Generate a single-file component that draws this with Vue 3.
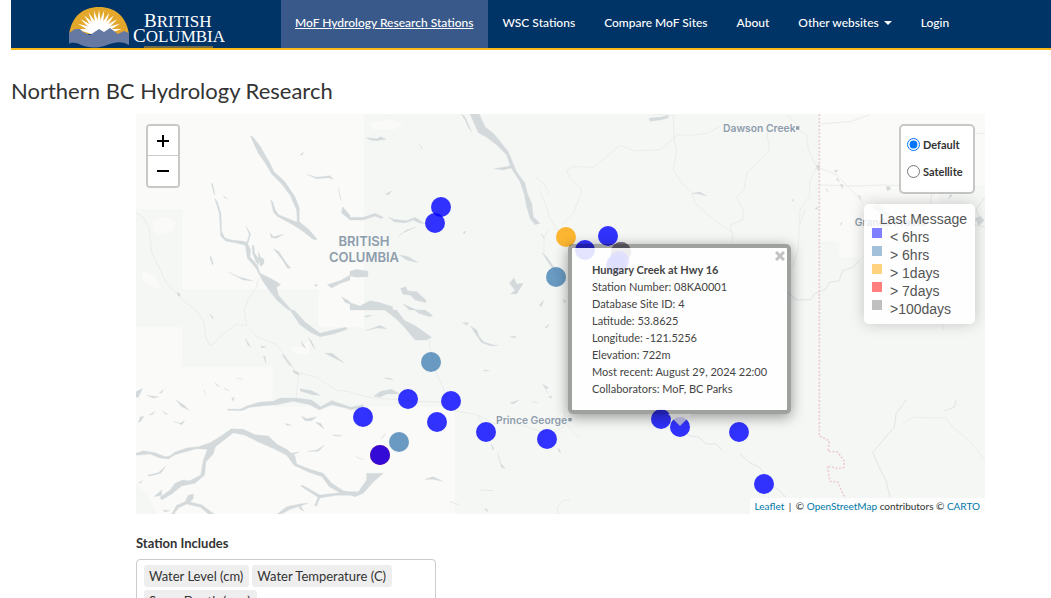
<script setup>
import { ref } from 'vue'

const basemap = ref('default')
const popupOpen = ref(true)

const links = [
  { label: 'MoF Hydrology Research Stations', active: true },
  { label: 'WSC Stations' },
  { label: 'Compare MoF Sites' },
  { label: 'About' },
  { label: 'Other websites', caret: true },
  { label: 'Login' },
]

const BLUE = '#0000ff'
const STEEL = '#4682b4'
// Map drawing units: three per screen pixel.
const stations = [
  [915, 279, BLUE], [897, 327, BLUE], [1290, 369, '#ffa500'], [1347, 408, BLUE],
  [1416, 366, BLUE], [1455, 414, '#ff0000'], [1455, 414, STEEL], [1455, 414, '#808080'], [1449, 441, BLUE], [1440, 453, BLUE],
  [1260, 489, STEEL], [885, 744, STEEL], [816, 855, BLUE], [945, 861, BLUE],
  [681, 909, BLUE], [903, 924, BLUE], [789, 984, STEEL], [732, 1023, '#ff0000'],
  [732, 1023, BLUE], [1050, 954, BLUE], [1233, 975, BLUE], [1575, 915, BLUE],
  [1632, 939, BLUE], [1809, 954, BLUE], [1884, 1110, BLUE],
]

const details = [
  'Station Number: 08KA0001',
  'Database Site ID: 4',
  'Latitude: 53.8625',
  'Longitude: -121.5256',
  'Elevation: 722m',
  'Most recent: August 29, 2024 22:00',
  'Collaborators: MoF, BC Parks',
]

const legend = [
  { color: 'blue', label: '< 6hrs' },
  { color: 'steel', label: '> 6hrs' },
  { color: 'orange', label: '> 1days' },
  { color: 'red', label: '> 7days' },
  { color: 'gray', label: '>100days' },
]

const included = ['Water Level (cm)', 'Water Temperature (C)', 'Snow Depth (mm)']

const rays = [-80, -66, -53, -40, -27, -13, 0, 13, 27, 40, 53, 66, 80]
</script>

<template>
  <div class="page">
    <header class="bar">
      <a class="brand" href="#" aria-label="British Columbia">
        <svg viewBox="0 0 156 44" width="156" height="44" aria-hidden="true">
          <clipPath id="dome"><path d="M0 30C3 12 14 3 30 3S57 12 60 30Z" /></clipPath>
          <g clip-path="url(#dome)">
            <rect width="60" height="34" fill="#e3a82b" />
            <path v-for="r in rays" :key="r" d="M27 28L29 12L30 6L31 12L33 28Z" fill="#fff" :transform="`rotate(${r} 30 29)`" />
            <circle cx="30" cy="28" r="9" fill="#fff" />
          </g>
          <path d="M0 29L6 25L11 25L14 28L21 31L30 25L35 28L41 24L49 30L55 27L60 29V41C52 37 47 38 38 41C27 45 18 44 10 40C4 38 1 39 0 40Z" fill="#6679a3" />
          <text class="brand-word" x="75" y="23" font-size="19">B<tspan font-size="17">RITISH</tspan></text>
          <text class="brand-word" x="64" y="38" font-size="19">C<tspan font-size="17">OLUMBIA</tspan></text>
          <path d="M75 43H144" stroke="#e3a82b" stroke-width="1" />
        </svg>
      </a>
      <nav class="links">
        <a v-for="l in links" :key="l.label" href="#" class="link" :class="{ active: l.active }">
          {{ l.label }}<span v-if="l.caret" class="caret"></span>
        </a>
      </nav>
    </header>

    <h1 class="title">Northern BC Hydrology Research</h1>

    <main class="content">
      <section class="map" aria-label="Station map">
        <svg class="tiles" viewBox="0 0 2547 1200" preserveAspectRatio="xMinYMin slice">
          <rect width="2547" height="1200" fill="#f5f7f5" />
          <g fill="#fafaf8">
            <path d="M0 0H684V640H547V525H139V285H0Z" />
            <path d="M0 640H139V760H410V878H957V1200H60L40 1150L0 1110Z" />
            <path d="M2049 0H2547V213H2410V420H2180V430H2110V380H2049Z" />
            <path d="M50 320l40-12 30 14-8 30-40 10-22-14zM20 470l36 14 20 40-30-6-28-20zM460 700l40-4 20-16v40h-40zM700 30l60-14 40 10-20 20-70 0z" />
          </g>

          <g class="road">
            <g transform="translate(-18 -12)">
              <path d="M18 308L40 322L56 350L66 430L86 470L110 520L140 550L170 580L198 600M385 505L378 535L355 565L343 600" />
            </g>
            <g transform="translate(-18 588)">
              <path d="M198 0L222 35L228 85L240 106L256 98L275 75L318 44L350 46L380 80L440 104L475 150L505 200L498 262M343 0L350 46M505 188L560 202L600 228L620 241L660 245" />
            </g>
            <g transform="translate(642 588)">
              <path d="M240 85L238 110L260 190L280 235L300 300L380 314L430 340L520 346L600 375L640 350L655 330M0 248L60 262L210 275L280 276M660 570L640 572L622 590L624 612M380 314L410 360" />
            </g>
            <g transform="translate(1272 -12)">
              <path d="M20 180L40 170L100 172L180 106L222 122L300 120L342 85L350 75L400 75L440 70L480 50M20 180L30 205L65 240L55 270L40 310L10 340M342 85L350 120L340 180L365 220L397 250L405 280L470 335L520 370L515 400M278 12L340 16L342 85M620 60L628 120L590 160L560 190L552 240L530 262L550 300L548 330L510 345L515 370M720 340L735 300M680 15L720 50" />
            </g>
            <g transform="translate(1962 -12)">
              <path d="M25 60L50 75L55 120L80 170L60 210L58 260L30 300L25 420L8 470M80 170L140 195L180 235L220 280M90 42L180 35L240 14M425 250L420 290M555 70H585M90 225L200 228L270 225L330 227M410 360V440M430 610L460 640V660" />
            </g>
            <path d="M1212 230L1236 290L1240 310L1270 355L1300 350M1224 420V372L1236 347M1240 240L1225 210L1200 190" />
            <path d="M2300 930L2330 910L2430 912L2450 940L2500 980L2547 1040M1284 890L1290 930L1330 970" />
          </g>

          <g class="river">
            <path d="M1962 540L1985 558L2025 557L2035 540L2070 525L2080 505L2110 500L2120 470L2150 460L2170 440M2547 250L2520 285L2530 310L2510 330L2547 340" />
            <path d="M1840 700L1830 660L1845 600L1905 530L1945 525L1980 560" />
            <path d="M2310 858L2280 900L2275 940L2240 980L2210 1015L2225 1050L2250 1100L2262 1150M2460 858L2455 880L2425 890" />
            <path d="M1640 950L1660 965L1690 970L1710 990L1740 990L1760 1010M1812 1020L1840 1045L1870 1060L1910 1110L1950 1150" />
          </g>

          <g class="water">
            <g transform="translate(-18 -12)">
              <path d="M361 78L368 80L392 110L408 140L416 152L432 185L462 212L478 235L495 260L508 295L508 335L536 358L562 388L552 390L520 365L490 345L440 318L430 305L422 270L428 275L436 300L446 314L490 332L502 336L500 300L480 255L455 222L425 192L405 158L385 130Z" />
              <path d="M244 220L248 222L255 255L251 250ZM254 265L262 275L273 310L275 365L285 384L305 390L340 394L352 398L362 420L360 440L382 465L390 490L412 500L440 515L452 524L440 532L445 555L484 600L475 600L440 570L415 538L395 508L378 475L352 445L346 406L315 398L288 394L272 378L268 310Z" />
              <path d="M348 349L362 372L354 400L350 398L358 374ZM366 405L372 408L374 430L386 446L386 465L378 455L368 430ZM385 425L392 442L402 448V460L392 470L386 450Z" />
              <path d="M420 368L430 380L460 373L440 385L424 383ZM430 416L446 424L470 460L482 474L473 475L456 448ZM295 486L325 500L368 512L340 510ZM242 438L250 460L248 465L240 445ZM510 134L521 126L516 135ZM280 258L292 266L284 264ZM530 193L560 202L600 197L610 208L596 203L560 206ZM625 233L634 272L630 260ZM638 290L660 316V330L634 308ZM592 524L605 520L630 512L660 496V510L632 520L605 534ZM635 560L660 575V582L645 577ZM553 524l10 0-4 6zM142 546l8 6v8l-6-4z" />
            </g>
            <g transform="translate(642 -12)">
              <path d="M360 12H388L405 50L432 72L455 100L475 125L485 150L500 185L525 220L532 250L545 280L550 320L570 340L555 344L540 325L530 290L522 250L510 215L482 172L470 135L440 105L410 82L385 68Z" />
              <path d="M334 12L345 20L365 65L355 52L344 28ZM432 176L480 168L490 172L460 180ZM50 83L80 86L92 80L108 88L80 92L60 90ZM105 252L125 243L116 254ZM208 103L218 118L214 110ZM0 322L40 322L75 310L100 322L95 326L75 318L40 330L0 330ZM114 320L130 328L170 332L195 322L225 341L205 338L190 330L165 339L132 335ZM145 378L170 360L198 351L160 368ZM147 434L175 440L204 458L170 450ZM0 484L20 478L54 484V500L20 502L0 498ZM0 578L30 588L60 572L90 578L128 590V600H0ZM152 535L168 530L172 542L200 545L228 570V578L195 570L182 556L158 552ZM160 582L200 600H178ZM478 520L492 504L500 522L520 520L500 552H482L495 540ZM568 585L582 570L574 590ZM575 372L584 385L578 380ZM576 428L590 440L625 490L618 490L600 465ZM340 366l8-2-6 8z" />
            </g>
            <g transform="translate(1272 -12)"><path d="M268 24L300 22L325 16V24L300 30L270 34ZM396 250L420 246L440 258L418 252ZM694 270l6-2v6zM10 568l8 6-6 4z" /></g>
            <g transform="translate(1962 -12)"><path d="M80 165l8 0v12l-6 4zM132 182l12-2-6 8zM138 206l6 0 4 10zM150 222l8 2 0 12zM110 236l4 10-6-6zM288 230h12l2 8-10 4zM205 255l6 4 2 12zM482 252l4 6-12 10zM245 290l20-8 12 12 30 26-28-4zM152 340l6-4-6 10zM555 325l16-6 12 12-16 16zM75 295l8-4-2 8z" /></g>
            <g transform="translate(-18 588)">
              <path d="M480 0H492L525 36L570 70L600 62L648 52L652 58L610 72L570 80L540 66L510 44Z" />
              <path d="M292 297L330 298L350 288L390 276L430 274L450 264L500 264L545 270L572 290L605 272L660 290V298L605 284L568 300L540 284L490 274L440 284L395 288L360 292L335 302L295 301Z" />
              <path d="M18 430L40 422L75 428L105 440L120 438L135 426L170 414L205 410L240 398L270 380L304 356L340 358L375 374L415 378L440 402L470 418L495 438L500 462L540 478L580 490L605 520L640 542L660 545V556H620L570 564L560 587H553L564 562L512 528L516 525L570 555L630 548L598 530L576 500L535 486L492 466L470 436L435 418L385 396L345 376L310 368L280 392L256 410L250 432L228 455L224 495L195 520L155 528L125 552L95 570L90 562L120 540L135 520L158 510L180 512L212 495L220 450L232 418L200 416L135 434L115 447L90 444L60 432L18 436Z" />
              <path d="M125 612L140 586L165 575L175 556L190 552L190 566L180 576L215 584L252 612H235L212 592L170 582L145 594L132 612ZM442 612L470 590L510 582L535 579L512 588L480 598L455 612ZM510 586L522 604L508 596ZM100 600l20 2-16 4zM72 560L95 540V556ZM52 496L85 488L108 468L92 490L60 498ZM26 518l12-6-8 8z" />
              <path d="M18 245L38 235L25 262L18 262ZM50 256L86 261L70 264ZM88 250L100 238L96 248ZM25 338L30 322L42 318L34 332ZM58 314L76 304L66 314ZM98 304L114 314L106 312ZM130 334L150 340L164 332L156 344ZM138 270L160 284L178 300L155 290ZM222 238L226 250L228 256ZM255 218L270 230L260 226ZM282 234L298 242L290 240ZM320 204L338 209ZM305 266l8-4-4 12zM346 85L362 110L354 106ZM400 138L406 140L407 160ZM392 108l16 2-12 4zM456 134L462 136L486 170L478 166ZM514 94L528 115L518 108ZM535 82L545 94L556 118L548 108ZM585 130L606 130L642 158L605 140ZM510 236L545 242L570 256L548 254L512 244ZM514 318L530 326L560 320L545 332L525 332ZM556 337L572 340L582 356ZM466 340L484 346L470 346ZM606 374L636 377L620 379ZM532 424L560 420L584 405L565 424ZM485 430L508 426L490 434ZM488 180l16 6 4 10-16-8zM240 12l8 8v8z" />
            </g>
            <g transform="translate(642 588)">
              <path d="M105 0H140L162 30L200 50L245 82L230 90H195L170 60L145 32ZM195 0H225L248 16L240 20L205 10ZM338 38L356 38L350 46ZM362 48L380 60L388 80L400 95L430 105L445 106L425 108L395 98L375 70ZM480 80L498 78L495 84ZM585 52L598 42L590 54ZM42 18l24-2-16 6zM48 62L90 46L110 56L80 54ZM72 258L92 244L125 238L150 252L110 252L90 262ZM0 292L40 284V292L0 300ZM102 205L120 204L130 210ZM400 180L418 182L404 184ZM480 278L508 270L490 282ZM545 275L564 278ZM578 222L596 234L586 236L594 250ZM92 386L108 370L100 380ZM18 440L42 450ZM0 545L25 545L50 510L50 490L100 490L70 516L40 550L15 560L0 556ZM225 508L250 500L278 514L250 508ZM424 402l8 14-4 4zM444 430L452 460L466 475L454 472ZM300 575L325 584ZM392 540L430 542ZM404 596l8 2v8zM596 258l10 2-4 6zM624 414l6 6 2 8-6-4z" />
            </g>
          </g>

          <path class="border" d="M2050 0V966L2080 980L2076 1012L2105 1014L2124 1040V1060L2108 1064L2074 1056L2082 1102L2106 1104L2116 1130L2130 1156" />

          <g class="place">
            <g font-size="39" text-anchor="middle"><text x="684" y="397">BRITISH</text><text x="684" y="444">COLUMBIA</text></g>
            <g font-size="31">
              <text x="1761" y="53">Dawson Creek</text>
              <text x="1080" y="929">Prince George</text>
              <text x="2156" y="336">Grande Prairie</text>
            </g>
            <path d="M1980 37h10v10h-10zM1297 912h10v10h-10z" />
          </g>

          <circle v-for="(s, i) in stations" :key="i" :cx="s[0]" :cy="s[1]" r="30" :fill="s[2]" fill-opacity="0.8" />
        </svg>

        <div class="zoom">
          <button type="button" aria-label="Zoom in"><svg viewBox="0 0 12 12" width="12" height="12"><path d="M0 6H12M6 0V12" /></svg></button>
          <button type="button" aria-label="Zoom out"><svg viewBox="0 0 12 12" width="12" height="12"><path d="M0 6H12" /></svg></button>
        </div>

        <div v-if="popupOpen" class="popup">
          <button type="button" class="close" aria-label="Close" @click="popupOpen = false">
            <svg viewBox="0 0 10 10" width="10" height="10"><path d="M1 1L9 9M9 1L1 9" /></svg>
          </button>
          <strong>Hungary Creek at Hwy 16</strong>
          <span v-for="d in details" :key="d">{{ d }}</span>
        </div>

        <div class="corner">
          <div class="layers">
            <label><input v-model="basemap" type="radio" name="basemap" value="default" />Default</label>
            <label><input v-model="basemap" type="radio" name="basemap" value="satellite" />Satellite</label>
          </div>
          <div class="legend">
            <div class="legend-title">Last Message</div>
            <div v-for="l in legend" :key="l.label" class="legend-row"><i :class="l.color"></i>{{ l.label }}</div>
          </div>
        </div>

        <div class="credit"><a href="#">Leaflet</a> <span class="divider">|</span> © <a href="#">OpenStreetMap</a> contributors © <a href="#">CARTO</a></div>
      </section>

      <label class="field-label" for="includes">Station Includes</label>
      <div class="chips">
        <span v-for="c in included" :key="c" class="chip">{{ c }}</span>
        <input id="includes" type="text" />
      </div>
    </main>
  </div>
</template>

<style>
body { margin: 0; background: #fff; overflow-x: hidden; }
</style>

<style scoped>
.page { padding-left: 11px; font-family: Lato, "Liberation Sans", sans-serif; font-size: 12px; color: #333; }
.page * { box-sizing: border-box; }
button { cursor: pointer; padding: 0; }
.bar { display: flex; height: 50px; background: #036; border-bottom: 2px solid #fcba19; }
.brand { display: flex; align-items: flex-end; width: 270px; padding-left: 58px; }
.brand svg { display: block; }
.brand-word { fill: #fff; font-family: "Liberation Serif", serif; }
.links { display: flex; }
.link { display: flex; align-items: center; padding: 0 15px 3px 14px; color: #fff; font-size: 12px; font-weight: 500; text-decoration: none; white-space: nowrap; }
.link.active { background: #38598a; text-decoration: underline; }
.caret { margin-left: 5px; border: 4px solid transparent; border-top-color: #fff; border-bottom: 0; }
.title { margin: 27px 0 0; font-size: 22px; line-height: 28px; font-weight: 400; }
.content { padding: 9px 66px 40px 125px; }
.map { position: relative; height: 400px; overflow: hidden; }
.tiles { display: block; width: 100%; height: 100%; }
.road { fill: none; stroke: #eaedeb; stroke-width: 3; }
.river { fill: none; stroke: #e1e5e6; stroke-width: 3; }
.water { fill: #d4dadc; stroke: #d4dadc; stroke-width: 1; stroke-linejoin: round; }
.border { fill: none; stroke: #ecced2; stroke-width: 5; stroke-dasharray: 6 5; }
.place { fill: #8e9dab; font-family: Inter, sans-serif; font-weight: 600; stroke: #f7f8f7; stroke-width: 4; paint-order: stroke; }
.zoom { position: absolute; left: 10px; top: 10px; display: grid; border: 2px solid rgba(0, 0, 0, 0.2); border-radius: 4px; background-clip: padding-box; overflow: hidden; }
.zoom button { display: grid; place-items: center; width: 30px; height: 30px; border: 0; background: #fff; }
.zoom button:first-child { border-bottom: 1px solid #ccc; }
.zoom path { stroke: #000; stroke-width: 2; }
.popup { position: absolute; left: 432px; top: 130px; width: 223px; display: flex; flex-direction: column; padding: 13px 20px 13px; border: 4px solid rgba(0, 0, 0, 0.35); border-radius: 5px; background: rgba(255, 255, 255, 0.87); background-clip: padding-box; box-shadow: 0 3px 14px rgba(0, 0, 0, 0.4); font-size: 11px; line-height: 17px; white-space: nowrap; color: #444; }
.popup::after { content: ""; position: absolute; left: 96px; top: 100%; margin-top: 4px; border: 12px solid transparent; border-top-color: rgba(200, 200, 200, 0.8); border-bottom: 0; }
.close { position: absolute; right: 1px; top: 2px; width: 12px; height: 12px; border: 0; background: none; display: grid; place-items: center; }
.close path { stroke: #c3c3c3; stroke-width: 3; }
.corner { position: absolute; right: 10px; top: 10px; display: flex; flex-direction: column; align-items: flex-end; gap: 10px; }
.layers { display: flex; flex-direction: column; width: 76px; height: 70px; padding: 5px 6px; border: 2px solid rgba(0, 0, 0, 0.2); border-radius: 5px; background: #fff; background-clip: padding-box; font-size: 11px; font-weight: 700; }
.layers label { display: flex; align-items: center; gap: 3px; height: 27px; }
.layers input { width: 13px; height: 13px; margin: 0; flex: none; }
.legend { width: 111px; padding: 6px 8px; border-radius: 5px; background: rgba(255, 255, 255, 0.8); box-shadow: 0 0 15px rgba(0, 0, 0, 0.2); font: 14px/18px "Liberation Sans", Arial, sans-serif; color: #555; white-space: nowrap; }
.legend-title { text-align: right; }
.legend-row { display: flex; gap: 8px; }
.legend i { width: 10px; height: 10px; opacity: 0.5; }
.blue { background: #00f; }
.steel { background: #4682b4; }
.orange { background: #ffa500; }
.red { background: #f00; }
.gray { background: #808080; }
.credit { position: absolute; right: 0; bottom: 0; padding: 0 5px; background: rgba(255, 255, 255, 0.7); font-size: 10px; line-height: 16px; }
.credit a { color: #0078a8; text-decoration: none; }
.divider { margin: 0 2px; }
.field-label { display: block; margin-top: 20px; font-size: 13px; line-height: 18px; font-weight: 700; }
.chips { display: flex; flex-wrap: wrap; gap: 3px; width: 300px; margin-top: 7px; padding: 5px 7px; border: 1px solid #ccc; border-radius: 4px; }
.chip { padding: 0 6px 0 5px; border-radius: 3px; background: #eee; font-size: 13px; line-height: 22px; }
.chips input { flex: 1; min-width: 40px; border: 0; outline: 0; font: inherit; }
</style>
